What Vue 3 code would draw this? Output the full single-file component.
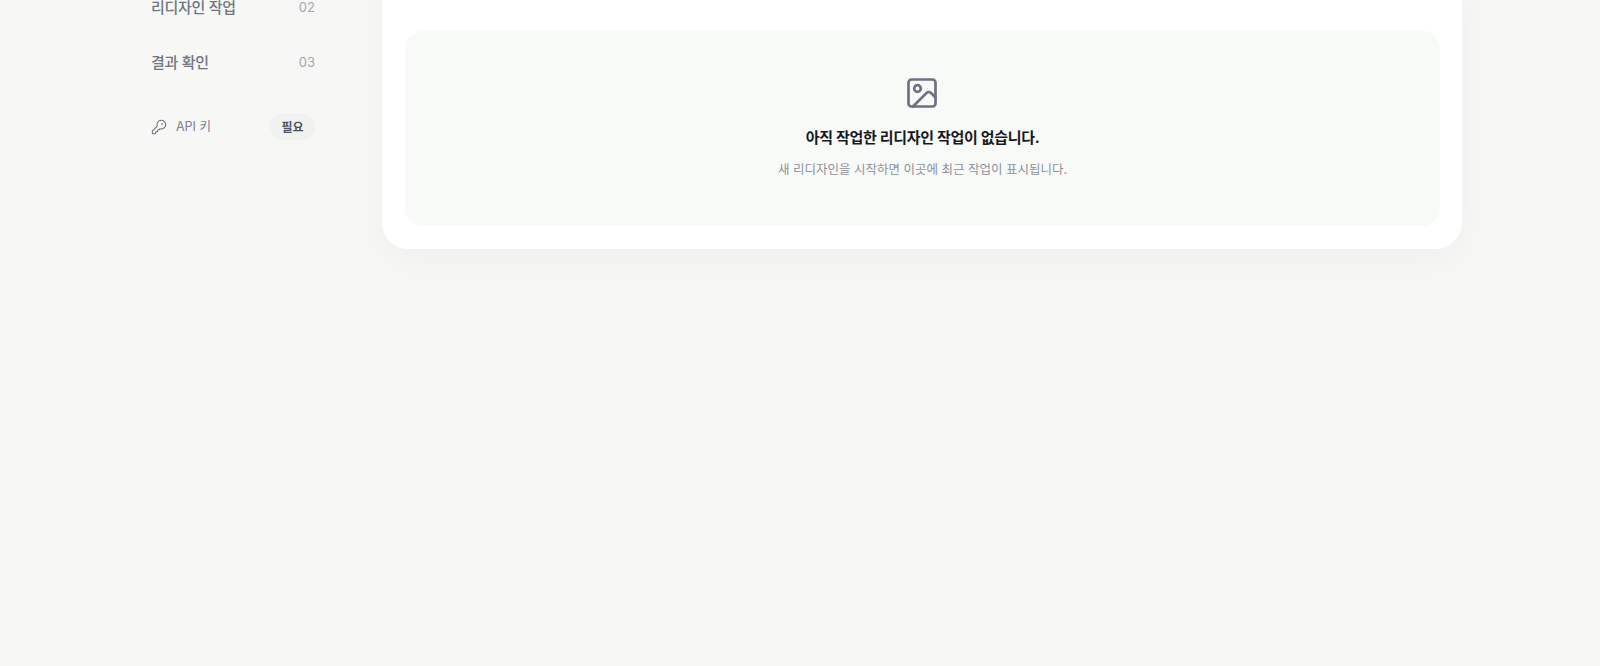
<script setup>
// sidebar steps still visible in this part of the page
const steps = [
  { label: "리디자인 작업", num: "02" },
  { label: "결과 확인", num: "03" },
];
</script>

<template>
  <div class="page">
    <div class="layout">
      <!-- left navigation -->
      <aside class="sidebar">
        <ul class="steps">
          <li v-for="step in steps" :key="step.num" class="step">
            <span class="step-label">{{ step.label }}</span>
            <span class="step-num">{{ step.num }}</span>
          </li>
        </ul>
        <div class="api-row">
          <span class="api-name">
            <svg class="key-icon" viewBox="0 0 24 24" fill="none" stroke="currentColor" stroke-width="1.6" stroke-linecap="round" stroke-linejoin="round">
              <path d="M2.586 17.414A2 2 0 0 0 2 18.828V21a1 1 0 0 0 1 1h3a1 1 0 0 0 1-1v-1a1 1 0 0 1 1-1h1a1 1 0 0 0 1-1v-1a1 1 0 0 1 1-1h.172a2 2 0 0 0 1.414-.586l.814-.814a6.5 6.5 0 1 0-4-4z" />
              <circle cx="16.5" cy="7.5" r=".5" fill="currentColor" />
            </svg>
            API 키
          </span>
          <span class="pill">필요</span>
        </div>
      </aside>

      <!-- recent jobs card, empty state -->
      <main class="card">
        <div class="empty">
          <svg class="image-icon" viewBox="0 0 24 24" fill="none" stroke="currentColor" stroke-width="1.8" stroke-linecap="round" stroke-linejoin="round">
            <rect x="3" y="3" width="18" height="18" rx="2" />
            <circle cx="9" cy="9" r="2.2" />
            <path d="m21 15-3.086-3.086a2 2 0 0 0-2.828 0L6 21" />
          </svg>
          <p class="empty-title">아직 작업한 리디자인 작업이 없습니다.</p>
          <p class="empty-text">새 리디자인을 시작하면 이곳에 최근 작업이 표시됩니다.</p>
        </div>
      </main>
    </div>
  </div>
</template>

<style>
html,
body {
  margin: 0;
  background: #f7f7f5;
}
</style>

<style scoped>
.page {
  height: 666px;
  overflow: hidden;
  background: #f7f7f5;
  font-family: Inter, "Noto Sans CJK KR", sans-serif;
}

/* page is scrolled down, so the top runs off the window */
.layout {
  display: flex;
  justify-content: space-between;
  width: 1324px;
  margin: -40px auto 0;
}

.sidebar {
  width: 164px;
  margin-left: 13px;
  padding-top: 19px;
}

.steps {
  list-style: none;
  margin: 0;
  padding: 0;
}

.step {
  display: flex;
  align-items: center;
  justify-content: space-between;
  height: 55px;
}

.step-label {
  font-size: 15px;
  font-weight: 500;
  letter-spacing: -0.02em;
  color: #6f7682;
}

.step-num {
  font-size: 13px;
  color: #a3a8b1;
}

.api-row {
  display: flex;
  align-items: center;
  justify-content: space-between;
  margin-top: 24px;
}

.api-name {
  display: flex;
  align-items: center;
  gap: 9px;
  font-size: 12.5px;
  line-height: 16px;
  color: #7c828d;
}

.key-icon {
  width: 16px;
  height: 16px;
  color: #6b7280;
}

.pill {
  display: flex;
  align-items: center;
  justify-content: center;
  width: 45px;
  height: 27px;
  border-radius: 14px;
  background: #eff2ee;
  font-size: 12px;
  font-weight: 600;
  color: #4b5563;
}

.card {
  box-sizing: border-box;
  width: 1080px;
  height: 289px;
  padding: 71px 22px 23px 23px;
  border-radius: 26px;
  background: #fff;
  box-shadow: 0 12px 36px rgba(30, 30, 20, 0.035);
}

.empty {
  display: flex;
  flex-direction: column;
  align-items: center;
  height: 195px;
  padding-top: 44px;
  box-sizing: border-box;
  border-radius: 18px;
  background: #f8faf7;
}

.image-icon {
  width: 36px;
  height: 36px;
  margin-left: -1px;
  color: #6b7280;
}

.empty-title {
  margin: 16px 0 0;
  font-size: 15px;
  line-height: 22px;
  font-weight: 700;
  letter-spacing: -0.02em;
  color: #16191f;
}

.empty-text {
  margin: 11px 0 0;
  font-size: 12.5px;
  line-height: 20px;
  color: #8b919c;
}
</style>
